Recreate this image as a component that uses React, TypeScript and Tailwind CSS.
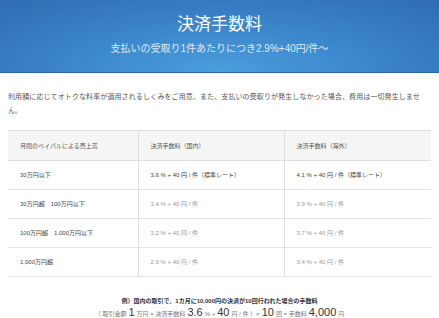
const font = "font-['Liberation_Sans','Noto_Sans_CJK_JP',sans-serif]";

const rows = [
  { range: "30万円以下", jp: "3.6 % + 40 円 / 件（標準レート）", intl: "4.1 % + 40 円 / 件（標準レート）", main: true },
  { range: "30万円超　100万円以下", jp: "3.4 % + 40 円 / 件", intl: "3.9 % + 40 円 / 件", main: false },
  { range: "100万円超　1,000万円以下", jp: "3.2 % + 40 円 / 件", intl: "3.7 % + 40 円 / 件", main: false },
  { range: "1,000万円超", jp: "2.9 % + 40 円 / 件", intl: "3.4 % + 40 円 / 件", main: false },
];

export default function App() {
  return (
    <div className={`w-[439px] h-[318px] bg-white overflow-hidden ${font}`}>
      <header className="h-[73px] flex flex-col items-center pt-[15px] gap-[8px] border-b border-[#2c68ac] bg-[radial-gradient(ellipse_70%_130%_at_50%_100%,#4a9edc_0%,#3d88cd_45%,#2f6eb6_100%)]">
        <h1 className="text-[17px] leading-[20px] text-white">決済手数料</h1>
        <p className="text-[10px] leading-[12px] text-[#dde9f7]">支払いの受取り1件あたりにつき2.9%+40円/件～</p>
      </header>

      <p className="mt-[17px] px-[8px] text-[7px] leading-[14px] tracking-[0.1px] text-[#555] whitespace-nowrap">
        利用額に応じてオトクな料率が適用されるしくみをご用意。また、支払いの受取りが発生しなかった場合、費用は一切発生しませ
        <br />
        ん。
      </p>

      <table className="mt-[12px] mx-[8px] w-[423px] border-collapse table-fixed text-[6px] leading-[8px]">
        <colgroup>
          <col className="w-[130px]" />
          <col className="w-[146px]" />
          <col className="w-[147px]" />
        </colgroup>
        <thead>
          <tr className="h-[30px] bg-[#f5f5f5] border-t border-b border-[#dedede] text-[#555]">
            <th className="pl-[12px] text-left font-normal">月間のペイパルによる売上高</th>
            <th className="pl-[12px] text-left font-normal border-l border-[#dedede]">決済手数料（国内）</th>
            <th className="pl-[12px] text-left font-normal border-l border-[#dedede]">決済手数料（海外）</th>
          </tr>
        </thead>
        <tbody>
          {rows.map((r) => (
            <tr key={r.range} className="h-[29px] border-b border-[#e2e2e2]">
              <td className="pl-[12px] text-[#444]">{r.range}</td>
              <td className={`pl-[12px] border-l border-[#dedede] ${r.main ? "text-[#444]" : "text-[#999]"}`}>{r.jp}</td>
              <td className={`pl-[12px] border-l border-[#dedede] ${r.main ? "text-[#444]" : "text-[#999]"}`}>{r.intl}</td>
            </tr>
          ))}
        </tbody>
      </table>

      <div className="mt-[19px] flex flex-col items-center">
        <p className="text-[6px] leading-[10px] font-bold text-[#333]">例）国内の取引で、1カ月に10,000円の決済が10回行われた場合の手数料</p>
        <p className="mt-[1px] flex items-baseline gap-[2px] text-[6px] leading-[11px] text-[#777]">
          <span>（ 取引金額</span>
          <span className="text-[11px] leading-[11px] text-[#333]">1</span>
          <span>万円 × 決済手数料</span>
          <span className="text-[11px] leading-[11px] text-[#333]">3.6</span>
          <span>% +</span>
          <span className="text-[11px] leading-[11px] text-[#333]">40</span>
          <span>円 / 件 ）×</span>
          <span className="text-[11px] leading-[11px] text-[#333]">10</span>
          <span>回 = 手数料</span>
          <span className="text-[11px] leading-[11px] text-[#333]">4,000</span>
          <span>円</span>
        </p>
      </div>
    </div>
  );
}
